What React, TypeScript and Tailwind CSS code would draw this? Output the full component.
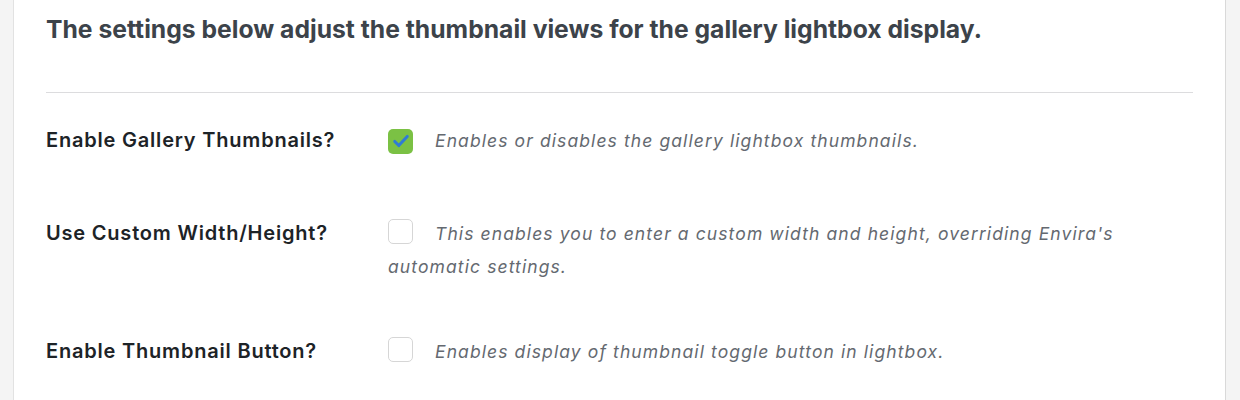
import React from "react";

const rows = [
  {
    label: "Enable Gallery Thumbnails?",
    checked: true,
    text: "Enables or disables the gallery lightbox thumbnails.",
    gap: "mt-[31px]",
  },
  {
    label: "Use Custom Width/Height?",
    checked: false,
    text: "This enables you to enter a custom width and height, overriding Envira's automatic settings.",
    gap: "mt-[60px]",
  },
  {
    label: "Enable Thumbnail Button?",
    checked: false,
    text: "Enables display of thumbnail toggle button in lightbox.",
    gap: "mt-[52px]",
  },
];

function Check({ checked }: { checked: boolean }) {
  if (checked) {
    return (
      <span className="mr-[22px] inline-flex h-[25px] w-[25px] items-center justify-center rounded-[5px] bg-[#7bc144] align-[-4px]">
        <svg width="20" height="20" viewBox="0 0 24 24" fill="none">
          <path d="M4.5 12.5l4.8 5L19.5 6.5" stroke="#2f7bd6" strokeWidth="3.6" strokeLinecap="round" strokeLinejoin="round" />
        </svg>
      </span>
    );
  }
  return (
    <span className="mr-[22px] inline-block h-[25px] w-[25px] rounded-[5px] border border-[#d6d6d6] bg-white align-[-4px]" />
  );
}

export default function App() {
  return (
    <div className="flex h-[400px] w-[1240px] bg-[#f4f4f4] font-['Inter','Liberation_Sans',sans-serif]">
      <div className="w-[14px] shrink-0 border-r border-[#e2e2e2]" />
      <div className="w-[1212px] shrink-0 border-r border-[#d9d9d9] bg-white px-[32px]">
        <h2 className="pt-[14px] text-[24.7px] font-bold leading-[30px] text-[#3c434a]">
          The settings below adjust the thumbnail views for the gallery lightbox display.
        </h2>
        <div className="mt-[48px] h-px bg-[#dcdcde]" />
        {rows.map((r) => (
          <div key={r.label} className={`flex ${r.gap}`}>
            <div className="w-[342px] shrink-0 text-[20px] font-semibold leading-[33px] tracking-[0.8px] text-[#1d2327]">
              {r.label}
            </div>
            <div className="flex-1 text-[17.5px] italic leading-[33px] tracking-[1.1px] text-[#646970]">
              <Check checked={r.checked} />
              {r.text}
            </div>
          </div>
        ))}
      </div>
      <div className="flex-1" />
    </div>
  );
}
